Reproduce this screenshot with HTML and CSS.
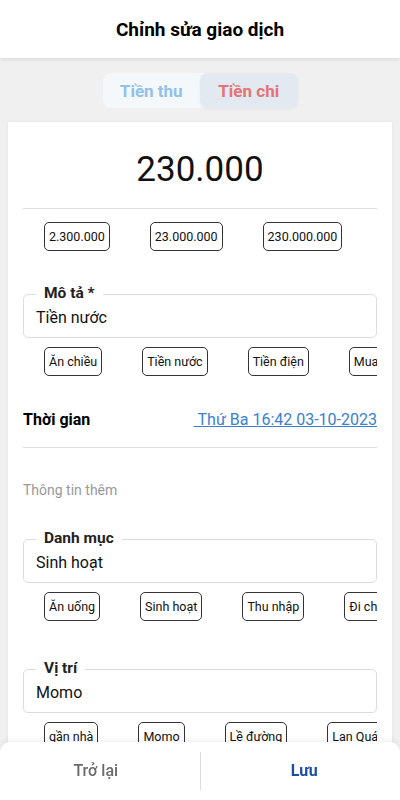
FILE: index.html
```html
<!DOCTYPE html>
<html>
<head>
  <title>Chỉnh sửa giao dịch</title>
  <meta charset="UTF-8">
  <link rel="stylesheet" href="styles.css">
</head>
<body>
  <div class="header">Chỉnh sửa giao dịch</div>

  <div class="page">
    <div class="type-switch">
      <div class="type-option type-income">Tiền thu</div>
      <div class="type-option type-expense active">Tiền chi</div>
    </div>

    <div class="card">
      <div class="amount">230.000</div>
      <div class="divider"></div>

      <div class="chips">
        <span class="chip">2.300.000</span>
        <span class="chip">23.000.000</span>
        <span class="chip">230.000.000</span>
      </div>

      <div class="field field-first">
        <span class="field-label">Mô tả *</span>
        <div class="field-value">Tiền nước</div>
      </div>
      <div class="chips">
        <span class="chip">Ăn chiều</span>
        <span class="chip">Tiền nước</span>
        <span class="chip">Tiền điện</span>
        <span class="chip">Mua sắm</span>
      </div>

      <div class="time-row">
        <span class="time-label">Thời gian</span>
        <a class="time-value" href="#">&nbsp;Thứ Ba 16:42 03-10-2023</a>
      </div>
      <div class="divider"></div>

      <div class="section-title">Thông tin thêm</div>

      <div class="field field-category">
        <span class="field-label">Danh mục</span>
        <div class="field-value">Sinh hoạt</div>
      </div>
      <div class="chips">
        <span class="chip">Ăn uống</span>
        <span class="chip">Sinh hoạt</span>
        <span class="chip">Thu nhập</span>
        <span class="chip">Đi chợ</span>
      </div>

      <div class="field field-place">
        <span class="field-label">Vị trí</span>
        <div class="field-value">Momo</div>
      </div>
      <div class="chips">
        <span class="chip">gần nhà</span>
        <span class="chip">Momo</span>
        <span class="chip">Lề đường</span>
        <span class="chip">Lan Quán</span>
      </div>
    </div>
  </div>

  <div class="bottom-bar">
    <button class="bar-btn btn-back">Trở lại</button>
    <div class="bar-sep"></div>
    <button class="bar-btn btn-save">Lưu</button>
  </div>
</body>
</html>
```

FILE: styles.css
```css
* {
  margin: 0;
  padding: 0;
  box-sizing: border-box;
}

body {
  width: 400px;
  height: 800px;
  font-family: Roboto, "Liberation Sans", sans-serif;
  background: #f0f0f0;
  color: #111;
  overflow: hidden;
}

.header {
  height: 58px;
  line-height: 60px;
  text-align: center;
  font-size: 19px;
  font-weight: 700;
  color: #000;
  background: white;
  box-shadow: 0 2px 4px rgba(0, 0, 0, 0.08);
  position: relative;
}

.page {
  padding-top: 15px;
}

.type-switch {
  width: 195px;
  height: 35px;
  margin: 0 auto 14px;
  display: flex;
  border-radius: 8px;
  background: #f5f8fb;
}

.type-option {
  flex: 1;
  display: flex;
  align-items: center;
  justify-content: center;
  font-size: 17px;
  font-weight: 700;
  border-radius: 8px;
}

.type-income {
  color: #92c1ea;
}

.type-expense {
  color: #e57373;
}

.type-option.active {
  background: #e2e9f0;
  box-shadow: 0 1px 3px rgba(0, 0, 0, 0.06);
}

.card {
  margin: 0 8px;
  padding: 0 15px 80px;
  background: white;
  box-shadow: 0 0 4px rgba(0, 0, 0, 0.06);
  min-height: 700px;
}

.amount {
  padding: 26px 0 16px;
  line-height: 44px;
  font-size: 35px;
  text-align: center;
  color: #111;
}

.divider {
  height: 1px;
  background: #dedede;
}

.chips {
  display: flex;
  gap: 40px;
  padding-left: 21px;
  margin-top: 13px;
  overflow: hidden;
  white-space: nowrap;
}

.field + .chips {
  margin-top: 9px;
}

.chip {
  flex-shrink: 0;
  height: 29px;
  line-height: 27px;
  padding: 0 4px;
  border: 1px solid #333;
  border-radius: 5px;
  font-size: 12.5px;
  color: #111;
}

.field {
  position: relative;
  height: 44px;
  border: 1px solid #dcdcdc;
  border-radius: 5px;
}

.field-first {
  margin-top: 43px;
}

.field-category {
  margin-top: 40px;
}

.field-place {
  margin-top: 48px;
}

.field-label {
  position: absolute;
  left: 12px;
  top: -11px;
  padding: 0 8px;
  background: white;
  font-size: 15.5px;
  font-weight: 700;
  line-height: 18px;
  color: #222;
}

.field-value {
  padding: 13px 12px 0;
  font-size: 16px;
  line-height: 20px;
  color: #111;
}

.time-row {
  display: flex;
  justify-content: space-between;
  align-items: center;
  padding: 33px 0 16px;
  line-height: 22px;
}

.time-label {
  font-size: 16px;
  font-weight: 700;
  color: #000;
}

.time-value {
  font-size: 16px;
  color: #3b7fcf;
  text-decoration: underline;
}

.section-title {
  margin-top: 33px;
  line-height: 18px;
  font-size: 14px;
  color: #999;
}

.bottom-bar {
  position: fixed;
  left: 0;
  right: 0;
  bottom: 0;
  height: 58px;
  display: flex;
  align-items: center;
  gap: 8px;
  background: white;
  border-radius: 10px 10px 0 0;
  box-shadow: 0 -2px 6px rgba(0, 0, 0, 0.06);
}

.bar-btn {
  flex: 1;
  height: 100%;
  border: none;
  background: none;
  font-family: inherit;
  font-size: 16px;
  font-weight: 500;
  padding-bottom: 2px;
}

.btn-back {
  color: #6b6b6b;
}

.btn-save {
  color: #1b4e9f;
  font-weight: 700;
}

.bar-sep {
  width: 1px;
  height: 38px;
  background: #ddd;
}
```
